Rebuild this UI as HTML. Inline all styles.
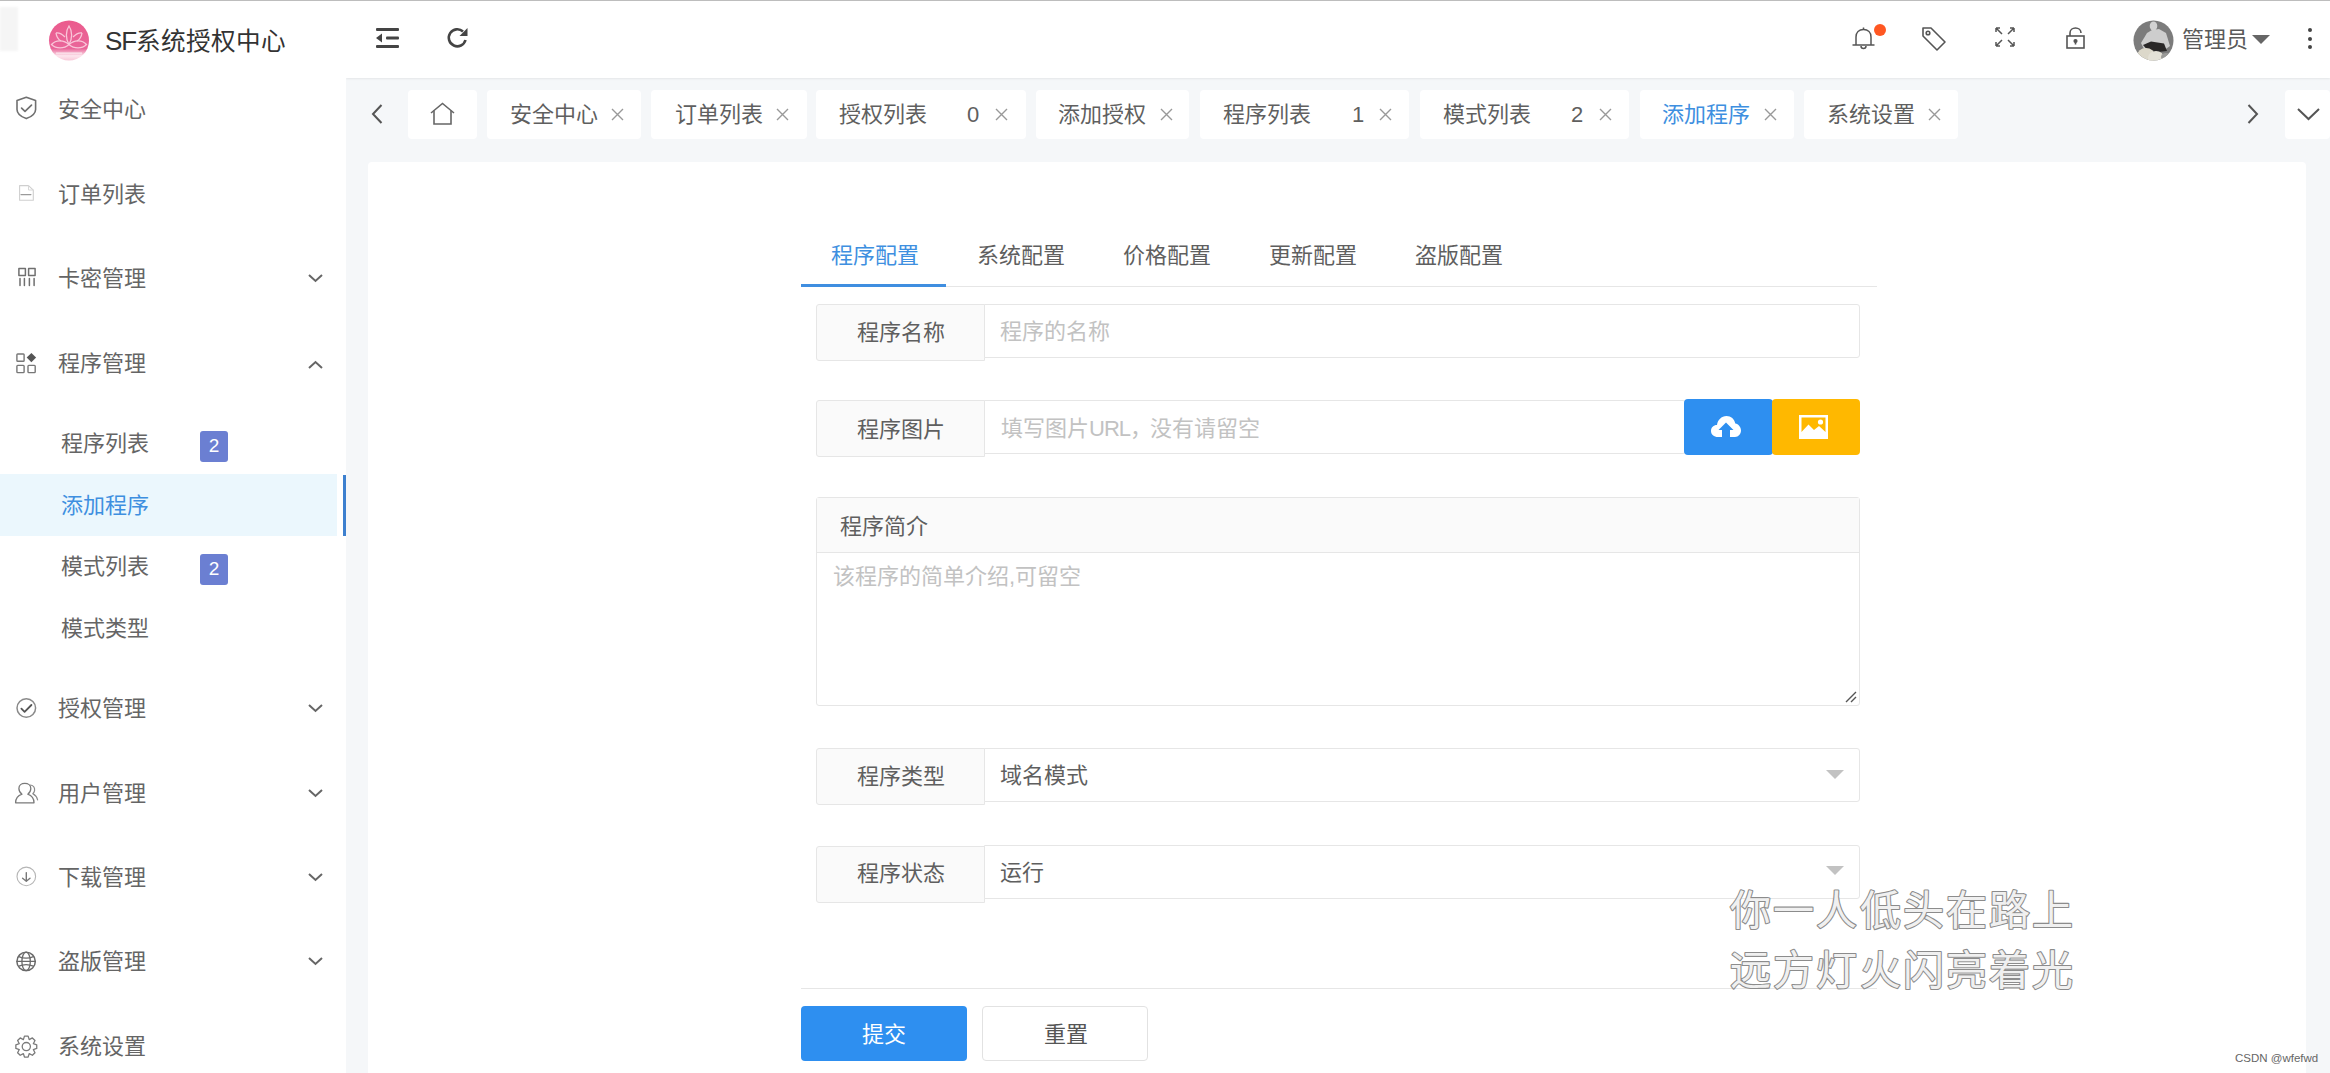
<!DOCTYPE html>
<html lang="zh-CN"><head><meta charset="utf-8">
<style>
*{box-sizing:border-box;margin:0;padding:0}
html,body{width:2330px;height:1073px;overflow:hidden;background:#fff;font-family:"Liberation Sans",sans-serif;color:#5f5f5f}
.a{position:absolute}
.t{position:absolute;white-space:nowrap;font-size:22px;line-height:22px}
svg{position:absolute;overflow:visible}
.tab{position:absolute;top:90px;height:49px;background:#fff;border-radius:4px}
.mi{color:#656565}
.badge{position:absolute;width:28px;height:31px;background:#6b7fd2;color:#fff;border-radius:3px;font-size:19px;line-height:30px;text-align:center}
.lbl{position:absolute;left:816px;width:169px;height:57px;background:#fafafa;border:1px solid #e6e6e6;border-radius:3px 0 0 3px}
.inp{position:absolute;left:984px;width:876px;height:54px;background:#fff;border:1px solid #e6e6e6;border-radius:0 3px 3px 0}
.ph{color:#c2c2c2}
</style></head><body>
<div class="a" style="left:0;top:0;width:2330px;height:1px;background:#bdbdbd;z-index:9"></div>

<!-- backgrounds -->
<div class="a" style="left:346px;top:78px;width:1984px;height:995px;background:#f5f7f9"></div>
<div class="a" style="left:346px;top:0;width:1984px;height:78px;background:#fff;box-shadow:0 1px 2px rgba(0,0,0,.07)"></div>
<div class="a" style="left:0;top:0;width:346px;height:1073px;background:#fff"></div>

<!-- logo -->
<div class="a" style="left:0;top:7px;width:18px;height:44px;background:#f5f5f5;filter:blur(1px)"></div>
<svg style="left:49px;top:20px" width="40" height="41" viewBox="0 0 40 41">
 <defs><linearGradient id="lg" x1="0" y1="0" x2="0" y2="1">
  <stop offset="0" stop-color="#eb5b8d"/><stop offset=".7" stop-color="#e9669a"/><stop offset=".8" stop-color="#f3a9c4"/><stop offset=".88" stop-color="#fde6ee"/><stop offset="1" stop-color="#f8c8d8"/>
 </linearGradient></defs>
 <circle cx="20" cy="20.5" r="20" fill="url(#lg)"/>
 <g fill="none" stroke="#f9c6d9" stroke-width="1.3">
  <path d="M20 6 C16.5 11 16.5 19 20 24.5 C23.5 19 23.5 11 20 6Z"/>
  <path d="M7 13 C10 12.5 13 14 16 17 M7 13 C7.5 17 9.5 19.5 12 21"/>
  <path d="M33 13 C30 12.5 27 14 24 17 M33 13 C32.5 17 30.5 19.5 28 21"/>
  <path d="M2.5 24.5 C7 19.5 15 20 20 24.5 C15 29 7 29 2.5 24.5Z"/>
  <path d="M37.5 24.5 C33 19.5 25 20 20 24.5 C25 29 33 29 37.5 24.5Z"/>
 </g>
 <rect x="7" y="32.5" width="26" height="1.2" fill="#fff" opacity=".7"/>
</svg>
<div class="t" style="left:105px;top:28px;font-size:26px;line-height:26px;color:#333"><span style="letter-spacing:-1px">SF</span><span style="font-size:24.6px">系统授权中心</span></div>

<!-- sidebar menu -->
<div class="t mi" style="left:58px;top:99px">安全中心</div>
<div class="t mi" style="left:58px;top:184px">订单列表</div>
<div class="t mi" style="left:58px;top:268px">卡密管理</div>
<div class="t mi" style="left:58px;top:353px">程序管理</div>
<div class="t mi" style="left:61px;top:433px">程序列表</div>
<div class="a" style="left:0;top:474px;width:337px;height:62px;background:#ebf7fd"></div>
<div class="a" style="left:343px;top:475px;width:3px;height:61px;background:#3d80cf"></div>
<div class="t" style="left:61px;top:495px;color:#3e8fe0">添加程序</div>
<div class="t mi" style="left:61px;top:556px">模式列表</div>
<div class="t mi" style="left:61px;top:618px">模式类型</div>
<div class="t mi" style="left:58px;top:698px">授权管理</div>
<div class="t mi" style="left:58px;top:783px">用户管理</div>
<div class="t mi" style="left:58px;top:867px">下载管理</div>
<div class="t mi" style="left:58px;top:951px">盗版管理</div>
<div class="t mi" style="left:58px;top:1036px">系统设置</div>
<div class="badge" style="left:200px;top:431px">2</div>
<div class="badge" style="left:200px;top:554px">2</div>

<!-- sidebar icons -->
<svg style="left:0;top:0" width="346" height="1073" fill="none" stroke-linecap="round" stroke-linejoin="round">
 <!-- shield -->
 <path d="M26.3 97.2 L35.6 100.6 V109.5 C35.6 113.6 31.8 116.6 26.3 118.6 C20.8 116.6 17 113.6 17 109.5 V100.6 Z" stroke="#707070" stroke-width="1.6"/>
 <path d="M21.6 108.2 L25 111.4 L31.5 105.2" stroke="#707070" stroke-width="1.7"/>
 <!-- doc -->
 <path d="M19.6 185.6 H28.5 L33.3 190.2 V200.3 H19.6 Z" stroke="#cfcfcf" stroke-width="1.1"/>
 <path d="M28.5 185.8 V190 H33" stroke="#d8d8d8" stroke-width="1"/>
 <path d="M21 194.6 H30.9" stroke="#9a9a9a" stroke-width="1.2"/>
 <!-- grid -->
 <rect x="18.9" y="268.6" width="6.5" height="6.8" stroke="#6f6f6f" stroke-width="1.5"/>
 <rect x="28.6" y="268.6" width="6.5" height="6.8" stroke="#6f6f6f" stroke-width="1.5"/>
 <path d="M20 278.6 V285.4 M24.4 278.6 V285.4 M29.4 278.6 V285.4 M34.1 278.6 V285.4" stroke="#6f6f6f" stroke-width="1.5"/>
 <!-- apps -->
 <rect x="16.9" y="354" width="7.2" height="7.2" rx=".8" stroke="#777" stroke-width="1.4"/>
 <rect x="16.9" y="365.4" width="7.2" height="7.2" rx=".8" stroke="#777" stroke-width="1.4"/>
 <rect x="28" y="365.4" width="7.2" height="7.2" rx=".8" stroke="#777" stroke-width="1.4"/>
 <path d="M31.4 352.9 L36.1 357.6 L31.4 362.3 L26.7 357.6 Z" fill="#555"/>
 <!-- check circle -->
 <circle cx="26.3" cy="708" r="9.3" stroke="#8a8a8a" stroke-width="1.5"/>
 <path d="M21.4 708.6 L24.6 711.8 L31.4 705" stroke="#555" stroke-width="1.8"/>
 <!-- user -->
 <path d="M22 794.2 C19.6 792.5 18.9 789.8 18.9 788.4 C18.9 785.2 21.5 783.3 24.8 783.3 C28.1 783.3 30.8 785.2 30.8 788.4 C30.8 790.2 29.9 792.6 27.8 794.2 C31.5 795.6 34 799 34 802.8 H15.6 C15.6 799 18.2 795.6 22 794.2 Z" stroke="#7a7a7a" stroke-width="1.3"/>
 <path d="M30.5 785 C33.4 785.6 34.8 788 34.6 790.4 C34.5 791.6 33.8 792.8 32.8 793.6 C35.4 795 37 797.3 37.6 799.8" stroke="#8a8a8a" stroke-width="1.2"/>
 <!-- download -->
 <circle cx="26.3" cy="876.4" r="9.3" stroke="#b5b5b5" stroke-width="1.1"/>
 <path d="M26.3 872.6 V880.6 M22.6 878.2 L26.3 881.2 L30 878.2" stroke="#777" stroke-width="1.4"/>
 <!-- globe -->
 <circle cx="26.1" cy="961.4" r="9.2" stroke="#6a6a6a" stroke-width="1.5"/>
 <ellipse cx="26.1" cy="961.4" rx="4.2" ry="9.2" stroke="#6a6a6a" stroke-width="1.3"/>
 <path d="M17 961.4 H35.2 M18.8 956.6 C23.5 958.6 28.7 958.6 33.4 956.6 M18.8 966.2 C23.5 964.2 28.7 964.2 33.4 966.2" stroke="#6a6a6a" stroke-width="1.3"/>
 <!-- gear -->
 <g transform="translate(14.3,1034.6)"><path d="M9.09 4.98 L10.16 1.56 L13.84 1.56 L14.91 4.98 L18.08 3.32 L20.68 5.92 L19.02 9.09 L22.44 10.16 L22.44 13.84 L19.02 14.91 L20.68 18.08 L18.08 20.68 L14.91 19.02 L13.84 22.44 L10.16 22.44 L9.09 19.02 L5.92 20.68 L3.32 18.08 L4.98 14.91 L1.56 13.84 L1.56 10.16 L4.98 9.09 L3.32 5.92 L5.92 3.32 Z" stroke="#7a7a7a" stroke-width="1.3"/>
 <circle cx="12" cy="12" r="4.1" stroke="#7a7a7a" stroke-width="1.3"/></g>
</svg>
<!-- chevrons -->
<svg style="left:308px;top:274px" width="15" height="8" viewBox="0 0 15 8" fill="none" stroke="#666" stroke-width="2"><path d="M1 1 L7.5 7 L14 1"/></svg>
<svg style="left:308px;top:361px" width="15" height="8" viewBox="0 0 15 8" fill="none" stroke="#666" stroke-width="2"><path d="M1 7 L7.5 1 L14 7"/></svg>
<svg style="left:308px;top:704px" width="15" height="8" viewBox="0 0 15 8" fill="none" stroke="#666" stroke-width="2"><path d="M1 1 L7.5 7 L14 1"/></svg>
<svg style="left:308px;top:789px" width="15" height="8" viewBox="0 0 15 8" fill="none" stroke="#666" stroke-width="2"><path d="M1 1 L7.5 7 L14 1"/></svg>
<svg style="left:308px;top:873px" width="15" height="8" viewBox="0 0 15 8" fill="none" stroke="#666" stroke-width="2"><path d="M1 1 L7.5 7 L14 1"/></svg>
<svg style="left:308px;top:957px" width="15" height="8" viewBox="0 0 15 8" fill="none" stroke="#666" stroke-width="2"><path d="M1 1 L7.5 7 L14 1"/></svg>

<!-- header icons -->
<svg style="left:375px;top:27px" width="24" height="22" viewBox="0 0 24 22" fill="#444">
 <rect x="1" y="1" width="23" height="3" rx="1"/><rect x="11" y="9.5" width="13" height="3" rx="1"/><rect x="1" y="18" width="23" height="3" rx="1"/>
 <path d="M1 11 L7 6.5 V15.5 Z"/>
</svg>
<svg style="left:446px;top:27px" width="24" height="22" viewBox="0 0 24 22" fill="none" stroke="#444" stroke-width="2.6">
 <path d="M19.5 13 A8.5 8.5 0 1 1 17 4.5"/><path d="M21.5 1 V9 H13.5 Z" fill="#444" stroke="none"/>
</svg>
<svg style="left:1852px;top:26px" width="23" height="24" viewBox="0 0 23 24" fill="none" stroke="#555" stroke-width="1.5">
 <path d="M4 19 V11 C4 6.5 7 3.5 11.5 3.5 C16 3.5 19 6.5 19 11 V19"/><path d="M0.5 19 H22.5"/><path d="M9 20 A2.5 2.5 0 0 0 14 20"/><path d="M11.5 1.5 V3.5"/>
</svg>
<div class="a" style="left:1874px;top:24px;width:12px;height:12px;border-radius:50%;background:#ff5722"></div>
<svg style="left:1921px;top:26px" width="26" height="25" viewBox="0 0 26 25" fill="none" stroke="#555" stroke-width="1.6">
 <path d="M2 2 H10 L24 16 L16 24 L2 10 Z" stroke-linejoin="round"/><circle cx="7" cy="7" r="1.8"/>
</svg>
<svg style="left:1995px;top:27px" width="20" height="20" viewBox="0 0 20 20" fill="none" stroke="#555" stroke-width="1.5">
 <path d="M1 1 L7 7 M1 1 V5 M1 1 H5"/><path d="M19 1 L13 7 M19 1 V5 M19 1 H15"/><path d="M1 19 L7 13 M1 19 V15 M1 19 H5"/><path d="M19 19 L13 13 M19 19 V15 M19 19 H15"/>
</svg>
<svg style="left:2066px;top:27px" width="19" height="22" viewBox="0 0 19 22" fill="none" stroke="#555" stroke-width="1.6">
 <rect x="1" y="9" width="17" height="12"/><path d="M4 9 V6 C4 3 6.5 1 9.5 1 C12.5 1 15 3 15 6"/><circle cx="9.5" cy="14" r="1.3" fill="#555"/><path d="M9.5 14 V17.5"/>
</svg>
<svg style="left:2133px;top:20px;filter:blur(.5px)" width="41" height="41" viewBox="0 0 41 41">
 <defs><clipPath id="cav"><circle cx="20.5" cy="20.5" r="20"/></clipPath></defs>
 <g clip-path="url(#cav)">
  <rect width="41" height="41" fill="#7c7c7c"/>
  <path d="M8 23 L14 13 L19 10 L26 9 L33 13 L37 26 L30 31 L12 31 Z" fill="#cdcdcd"/>
  <ellipse cx="20.5" cy="6" rx="3.8" ry="4.5" fill="#d2d2d2"/>
  <path d="M10 25 L18 21.5 L31 23.5 L34 31 L17 33 Z" fill="#2a2828"/>
  <ellipse cx="13" cy="36" rx="9" ry="8" fill="#dcd8ca"/>
  <ellipse cx="23" cy="38" rx="8" ry="7" fill="#e4e1d6"/>
  <ellipse cx="33" cy="37" rx="5" ry="4" fill="#9a9a98"/>
 </g>
</svg>
<div class="t" style="left:2182px;top:29px;color:#5a5a5a">管理员</div>
<svg style="left:2252px;top:35px" width="18" height="9" viewBox="0 0 18 9"><path d="M0 0 H18 L9 9 Z" fill="#666"/></svg>
<div class="a" style="left:2308px;top:28px;width:4px;height:4px;border-radius:50%;background:#444"></div>
<div class="a" style="left:2308px;top:37px;width:4px;height:4px;border-radius:50%;background:#444"></div>
<div class="a" style="left:2308px;top:45px;width:4px;height:4px;border-radius:50%;background:#444"></div>

<!-- tabs -->
<svg style="left:371px;top:104px" width="12" height="20" viewBox="0 0 12 20" fill="none" stroke="#555" stroke-width="2"><path d="M10.5 1 L2 10 L10.5 19"/></svg>
<div class="tab" style="left:408px;width:69px"></div>
<svg style="left:430px;top:102px" width="25" height="23" viewBox="0 0 25 23" fill="none" stroke="#666" stroke-width="1.6"><path d="M1 11 L12.5 1.5 L24 11"/><path d="M4 8.5 V22 H21 V8.5"/></svg>
<div class="tab" style="left:487px;width:154px"></div>
<div class="tab" style="left:651px;width:156px"></div>
<div class="tab" style="left:816px;width:210px"></div>
<div class="tab" style="left:1036px;width:153px"></div>
<div class="tab" style="left:1200px;width:209px"></div>
<div class="tab" style="left:1420px;width:209px"></div>
<div class="tab" style="left:1640px;width:154px"></div>
<div class="tab" style="left:1804px;width:154px"></div>
<svg style="left:2247px;top:104px" width="12" height="20" viewBox="0 0 12 20" fill="none" stroke="#555" stroke-width="2"><path d="M1.5 1 L10 10 L1.5 19"/></svg>
<div class="tab" style="left:2285px;width:45px"></div>
<svg style="left:2297px;top:108px" width="23" height="12" viewBox="0 0 23 12" fill="none" stroke="#555" stroke-width="2"><path d="M1 1 L11.5 11 L22 1"/></svg>

<div class="t" style="left:510px;top:104px">安全中心</div>
<div class="t" style="left:675px;top:104px">订单列表</div>
<div class="t" style="left:839px;top:104px">授权列表</div>
<div class="t" style="left:1058px;top:104px">添加授权</div>
<div class="t" style="left:1223px;top:104px">程序列表</div>
<div class="t" style="left:1443px;top:104px">模式列表</div>
<div class="t" style="left:1662px;top:104px;color:#3e8fe0">添加程序</div>
<div class="t" style="left:1827px;top:104px">系统设置</div>
<div class="t" style="left:967px;top:104px">0</div>
<div class="t" style="left:1352px;top:104px">1</div>
<div class="t" style="left:1571px;top:104px">2</div>
<!-- tab close x -->
<svg style="left:0;top:0" width="2330" height="200" fill="none" stroke="#999" stroke-width="1.4">
 <path d="M612 109 l11 11 m0 -11 l-11 11"/>
 <path d="M777 109 l11 11 m0 -11 l-11 11"/>
 <path d="M996 109 l11 11 m0 -11 l-11 11"/>
 <path d="M1161 109 l11 11 m0 -11 l-11 11"/>
 <path d="M1380 109 l11 11 m0 -11 l-11 11"/>
 <path d="M1600 109 l11 11 m0 -11 l-11 11"/>
 <path d="M1765 109 l11 11 m0 -11 l-11 11"/>
 <path d="M1929 109 l11 11 m0 -11 l-11 11"/>
</svg>

<!-- card -->
<div class="a" style="left:368px;top:162px;width:1938px;height:920px;background:#fff;border-radius:4px"></div>

<!-- form tabs -->
<div class="a" style="left:801px;top:286px;width:1076px;height:1px;background:#e6e6e6"></div>
<div class="a" style="left:801px;top:284px;width:145px;height:3px;background:#3f8ee0"></div>
<div class="t" style="left:831px;top:245px;color:#3e8fe0">程序配置</div>
<div class="t" style="left:977px;top:245px">系统配置</div>
<div class="t" style="left:1123px;top:245px">价格配置</div>
<div class="t" style="left:1269px;top:245px">更新配置</div>
<div class="t" style="left:1415px;top:245px">盗版配置</div>

<!-- row1 -->
<div class="lbl" style="top:304px"></div>
<div class="inp" style="top:304px"></div>
<div class="t" style="left:857px;top:322px">程序名称</div>
<div class="t ph" style="left:1000px;top:321px">程序的名称</div>
<!-- row2 -->
<div class="lbl" style="top:400px"></div>
<div class="inp" style="top:400px;width:702px"></div>
<div class="t" style="left:857px;top:419px">程序图片</div>
<div class="t ph" style="left:1001px;top:418px">填写图片<span style="letter-spacing:-1px">URL</span><span style="letter-spacing:-2px">，</span>没有请留空</div>
<div class="a" style="left:1684px;top:399px;width:89px;height:56px;background:#2e8ff0;border-radius:4px"></div>
<div class="a" style="left:1772px;top:399px;width:88px;height:56px;background:#ffb800;border-radius:4px"></div>
<svg style="left:1711px;top:416px" width="30" height="21" viewBox="0 0 30 21">
 <path d="M7 21 C3 21 0 18.5 0 15 C0 11.5 2.5 9 6 9 C6.5 4 10.5 0 15.5 0 C20 0 23.5 3 24.3 7.5 C27.5 8 30 11 30 14.5 C30 18 27.5 21 24 21 H19 V14 H22.5 L15 6.5 L7.5 14 H11 V21 Z" fill="#fff"/>
</svg>
<svg style="left:1799px;top:415px" width="29" height="24" viewBox="0 0 29 24">
 <path d="M0 0 H29 V24 H0 Z M2.5 2.5 V17 L9.5 9.5 L15 15 L20 11 L26.5 17 V2.5 Z" fill="#fff" fill-rule="evenodd"/>
 <circle cx="21.5" cy="7" r="2.6" fill="#fff"/>
</svg>
<!-- textarea -->
<div class="a" style="left:816px;top:497px;width:1044px;height:209px;border:1px solid #e6e6e6;border-radius:3px;background:#fff"></div>
<div class="a" style="left:817px;top:498px;width:1042px;height:55px;background:#fafafa;border-bottom:1px solid #e6e6e6"></div>
<div class="t" style="left:840px;top:516px">程序简介</div>
<div class="t ph" style="left:833px;top:566px">该程序的简单介绍,可留空</div>
<svg style="left:1845px;top:691px" width="12" height="12" viewBox="0 0 12 12" fill="none" stroke="#555" stroke-width="1.4"><path d="M1 11 L11 1 M6 11 L11 6"/></svg>
<!-- row3 -->
<div class="lbl" style="top:748px"></div>
<div class="inp" style="top:748px"></div>
<div class="t" style="left:857px;top:766px">程序类型</div>
<div class="t" style="left:1000px;top:765px">域名模式</div>
<svg style="left:1826px;top:770px" width="18" height="9" viewBox="0 0 18 9"><path d="M0 0 H18 L9 9 Z" fill="#c2c2c2"/></svg>
<!-- row4 -->
<div class="lbl" style="top:846px"></div>
<div class="inp" style="top:845px"></div>
<div class="t" style="left:857px;top:863px">程序状态</div>
<div class="t" style="left:1000px;top:862px">运行</div>
<svg style="left:1826px;top:866px" width="18" height="9" viewBox="0 0 18 9"><path d="M0 0 H18 L9 9 Z" fill="#c2c2c2"/></svg>

<!-- bottom -->
<div class="a" style="left:801px;top:988px;width:1076px;height:1px;background:#e6e6e6"></div>
<div class="a" style="left:801px;top:1006px;width:166px;height:55px;background:#2e8ff0;border-radius:4px"></div>
<div class="t" style="left:862px;top:1024px;color:#fff">提交</div>
<div class="a" style="left:982px;top:1006px;width:166px;height:55px;background:#fff;border:1px solid #e2e2e2;border-radius:4px"></div>
<div class="t" style="left:1044px;top:1024px;color:#555">重置</div>

<!-- watermark -->
<svg style="left:0;top:0" width="2330" height="1073" font-family="Liberation Sans, sans-serif" font-size="41" font-weight="500" letter-spacing="2.2">
 <g fill="#f0f0f0" stroke="#8c8c8c" stroke-width="2.2" paint-order="stroke" stroke-linejoin="round">
  <text x="1730" y="925">你一人低头在路上</text>
  <text x="1730" y="985">远方灯火闪亮着光</text>
 </g>
</svg>
<div class="t" style="left:2235px;top:1052px;font-size:11.5px;line-height:12px;color:#666">CSDN @wfefwd</div>
</body></html>
